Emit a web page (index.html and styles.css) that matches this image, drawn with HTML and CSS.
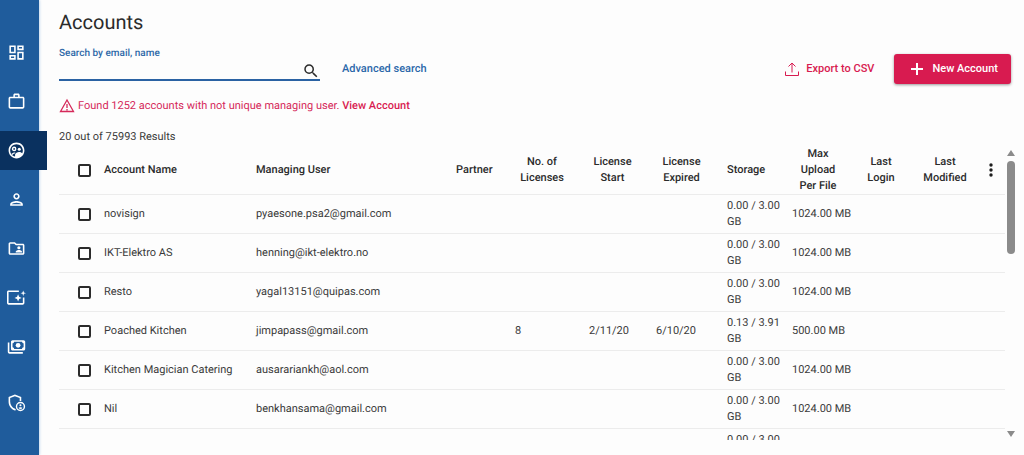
FILE: index.html
```
<!DOCTYPE html>
<html lang="en">
<head>
  <meta charset="utf-8">
  <title>Accounts</title>
  <link rel="stylesheet" href="styles.css">
</head>
<body>
  <nav class="sidebar">
    <a href="#" class="nav-item" aria-label="Dashboard">
      <svg viewBox="0 0 24 24"><path d="M19 5v2h-4V5h4M9 5v6H5V5h4m10 8v6h-4v-6h4M9 17v2H5v-2h4M21 3h-8v6h8V3zM11 3H3v10h8V3zm10 8h-8v10h8V11zm-10 4H3v6h8v-6z"/></svg>
    </a>
    <a href="#" class="nav-item" aria-label="Business">
      <svg viewBox="0 0 24 24"><path d="M14 6V4h-4v2h4zM4 8v11h16V8H4zm16-2c1.110 0 2 .89 2 2v11c0 1.110-.89 2-2 2H4c-1.110 0-2-.89-2-2V8c0-1.110.89-2 2-2h4V4c0-1.110.89-2 2-2h4c1.110 0 2 .89 2 2v2h4z"/></svg>
    </a>
    <a href="#" class="nav-item active" aria-label="Accounts">
      <svg viewBox="0 0 24 24"><path fill-rule="evenodd" d="M12 2C6.480 2 2 6.480 2 12s4.480 10 10 10 10-4.480 10-10S17.520 2 12 2zM4 12c0-4.400 3.600-8 8-8s8 3.600 8 8c0 1.200-.3 2.400-.8 3.400-1-.9-2.600-1.400-4-1.400-2.200 0-4.600 1.200-5 3v2.700C6.600 19 4 15.800 4 12z"/><path d="M5.500 16.500c1-1.500 3-2.300 5.200-2.100l-1.400 1.800c-1.200.1-2.100.6-2.500 1.800z"/><circle cx="9" cy="10" r="2" fill="none" stroke="currentColor" stroke-width="1.800"/><circle cx="15.500" cy="10.500" r="1.900"/></svg>
    </a>
    <a href="#" class="nav-item" aria-label="Users">
      <svg viewBox="0 0 24 24"><path d="M12 6c1.100 0 2 .9 2 2s-.9 2-2 2-2-.9-2-2 .9-2 2-2m0 10c2.700 0 5.800 1.290 6 2H6c.23-.72 3.310-2 6-2m0-12C9.790 4 8 5.790 8 8s1.790 4 4 4 4-1.790 4-4-1.790-4-4-4zm0 10c-2.670 0-8 1.340-8 4v2h16v-2c0-2.660-5.330-4-8-4z"/></svg>
    </a>
    <a href="#" class="nav-item" aria-label="Shared folders">
      <svg viewBox="0 0 24 24"><path d="M20 6h-8l-2-2H4c-1.100 0-2 .9-2 2v12c0 1.100.9 2 2 2h16c1.100 0 2-.9 2-2V8c0-1.100-.9-2-2-2zm0 12H4V6h5.170l2 2H20v10z"/><circle cx="15" cy="11" r="2"/><path d="M11 17v-1c0-1.330 2.670-2 4-2s4 .67 4 2v1z"/></svg>
    </a>
    <a href="#" class="nav-item" aria-label="Templates">
      <svg viewBox="0 0 24 24"><path d="M15 3H2c-1.100 0-2 .9-2 2v14c0 1.100.9 2 2 2h18c1.100 0 2-.9 2-2v-7h-2v7H2V5h13z"/><path d="M14 8l1.300 3.200 3.200 1.300-3.200 1.300L14 17l-1.300-3.200-3.200-1.300 3.200-1.300zM20.500 3l.9 2.600 2.600.9-2.600.9-.9 2.600-.9-2.600-2.600-.9 2.600-.9z"/></svg>
    </a>
    <a href="#" class="nav-item" aria-label="Payments">
      <svg viewBox="0 0 24 24"><path fill-rule="evenodd" d="M21 4H7c-1.100 0-2 .9-2 2v9c0 1.100.9 2 2 2h14c1.100 0 2-.9 2-2V6c0-1.100-.9-2-2-2zM9 15c0-1.100-.9-2-2-2V8c1.100 0 2-.9 2-2h10c0 1.100.9 2 2 2v5c-1.100 0-2 .9-2 2z"/><circle cx="14" cy="10.500" r="3"/><path d="M3 7H1v12c0 1.100.9 2 2 2h17v-2H3z"/></svg>
    </a>
    <a href="#" class="nav-item admin" aria-label="Administration">
      <svg viewBox="0 0 24 24"><path d="M18 10V5l-8-3-8 3v6c0 5 3.400 9.700 8 11l1.500-.5-1.300-1.700C6.600 18.600 4 15 4 11V6.400l6-2.300 6 2.300V10z"/><circle cx="17" cy="17" r="5" fill="none" stroke="currentColor" stroke-width="1.800"/><circle cx="17" cy="15.500" r="1.300"/><path d="M14.500 19c.5-1.500 4.500-1.500 5 0-1 1.500-4 1.500-5 0z"/></svg>
    </a>
  </nav>

  <main class="content">
    <h1>Accounts</h1>

    <div class="toolbar">
      <div class="search">
        <label for="search">Search by email, name</label>
        <div class="search-row">
          <input type="text" id="search">
          <button type="button" class="icon-btn" aria-label="Search">
            <svg viewBox="0 0 24 24"><path d="M15.500 14h-.79l-.28-.27A6.470 6.470 0 0 0 16 9.500 6.500 6.500 0 1 0 9.500 16c1.610 0 3.090-.59 4.230-1.570l.27.28v.79l5 4.990L20.490 19l-4.990-5zm-6 0C7.010 14 5 11.990 5 9.500S7.010 5 9.500 5 14 7.010 14 9.500 11.990 14 9.500 14z"/></svg>
          </button>
        </div>
      </div>
      <a href="#" class="advanced">Advanced search</a>
      <div class="actions">
        <button type="button" class="export-btn">
          <svg viewBox="0 0 16 16"><path d="M1.500 10.500v4h13v-4M8 11.500V2M4.500 5.500 8 2l3.500 3.500"/></svg>
          Export to CSV
        </button>
        <button type="button" class="new-btn">
          <svg viewBox="0 0 14 14"><path d="M7 1v12M1 7h12"/></svg>
          New Account
        </button>
      </div>
    </div>

    <p class="warning">
      <svg viewBox="0 0 16 16"><path d="M8 2 1.500 13.500h13zM8 6v4M8 11v1.500"/></svg>
      <span>Found 1252 accounts with not unique managing user. <a href="#">View Account</a></span>
    </p>

    <p class="results">20 out of 75993 Results</p>

    <div class="table-area">
      <div class="table-wrap">
        <table>
          <colgroup>
            <col class="col-check">
            <col class="col-name">
            <col>
            <col class="col-partner">
            <col class="col-licenses">
            <col class="col-start">
            <col class="col-expired">
            <col class="col-storage">
            <col class="col-upload">
            <col class="col-login">
            <col class="col-modified">
            <col class="col-menu">
          </colgroup>
          <thead>
            <tr>
              <th class="check"><input type="checkbox" aria-label="Select all"></th>
              <th>Account Name</th>
              <th>Managing User</th>
              <th>Partner</th>
              <th class="center">No. of<br>Licenses</th>
              <th class="center">License<br>Start</th>
              <th class="center">License<br>Expired</th>
              <th>Storage</th>
              <th class="center">Max<br>Upload<br>Per File</th>
              <th class="center">Last<br>Login</th>
              <th class="center modified">Last<br>Modified</th>
              <th>
                <button type="button" class="menu-btn" aria-label="Columns">
                  <svg viewBox="0 0 4 14"><circle cx="2" cy="2" r="1.700"/><circle cx="2" cy="7" r="1.700"/><circle cx="2" cy="12" r="1.700"/></svg>
                </button>
              </th>
            </tr>
          </thead>
          <tbody id="rows"></tbody>
        </table>
      </div>
      <div class="scrollbar" aria-hidden="true">
        <svg viewBox="0 0 8 6"><path d="M4 0l4 6H0z"/></svg>
        <div class="track"><div class="thumb"></div></div>
        <svg viewBox="0 0 8 6"><path d="M0 0h8L4 6z"/></svg>
      </div>
    </div>
  </main>

  <script>
    const accounts = [
      { name: "novisign", user: "pyaesone.psa2@gmail.com", storage: "0.00 / 3.00 GB", upload: "1024.00 MB" },
      { name: "IKT-Elektro AS", user: "henning@ikt-elektro.no", storage: "0.00 / 3.00 GB", upload: "1024.00 MB" },
      { name: "Resto", user: "yagal13151@quipas.com", storage: "0.00 / 3.00 GB", upload: "1024.00 MB" },
      { name: "Poached Kitchen", user: "jimpapass@gmail.com", licenses: "8", start: "2/11/20", expired: "6/10/20", storage: "0.13 / 3.91 GB", upload: "500.00 MB" },
      { name: "Kitchen Magician Catering", user: "ausarariankh@aol.com", storage: "0.00 / 3.00 GB", upload: "1024.00 MB" },
      { name: "Nil", user: "benkhansama@gmail.com", storage: "0.00 / 3.00 GB", upload: "1024.00 MB" },
      { storage: "0.00 / 3.00 GB" }
    ];

    document.getElementById("rows").innerHTML = accounts.map(a => `
      <tr>
        <td class="check">${a.name ? `<input type="checkbox" aria-label="Select ${a.name}">` : ""}</td>
        <td>${a.name || ""}</td>
        <td>${a.user || ""}</td>
        <td></td>
        <td>${a.licenses || ""}</td>
        <td>${a.start || ""}</td>
        <td>${a.expired || ""}</td>
        <td class="storage">${a.storage}</td>
        <td>${a.upload || ""}</td>
        <td></td>
        <td></td>
        <td></td>
      </tr>
    `).join("");
  </script>
</body>
</html>
```
FILE: styles.css
```
* {
  box-sizing: border-box;
}
body {
  margin: 0;
  height: 100vh;
  display: flex;
  overflow: hidden;
  background: #fdfdfd;
  color: #3a3a3a;
  font-family: Roboto, Arial, sans-serif;
  font-size: 11px;
  line-height: 16px;
  text-rendering: geometricPrecision;
}
button {
  font: inherit;
  border: none;
  background: none;
  padding: 0;
  cursor: pointer;
}
a {
  text-decoration: none;
}
svg {
  display: block;
  fill: currentColor;
}

/* sidebar */
.sidebar {
  flex: none;
  width: 39px;
  padding-top: 33px;
  background: #1f5c9c;
  box-shadow: 0 0 3px #9fc0e4;
}
.nav-item {
  display: flex;
  align-items: center;
  width: 47px;
  height: 39px;
  margin-bottom: 10px;
  padding-left: 7px;
  color: #fff;
}
.nav-item svg {
  width: 19px;
  height: 19px;
}
.nav-item.active {
  background: #0a315f;
}
.nav-item.admin {
  margin-top: 17px;
}

/* page header */
.content {
  flex: 1;
  min-width: 0;
  display: flex;
  flex-direction: column;
  padding: 10px 7px 15px 20px;
}
h1 {
  margin: 0 0 10px;
  color: #2b2b2b;
  font-size: 20px;
  font-weight: 400;
  line-height: 24px;
}
.toolbar {
  display: flex;
  align-items: flex-start;
  padding-right: 6px;
}
.search {
  width: 261px;
  padding-top: 2px;
  border-bottom: 2px solid #2a62a3;
}
.search label {
  display: block;
  color: #2f69a8;
  font-size: 10px;
  font-weight: 500;
}
.search-row {
  display: flex;
  align-items: center;
  height: 17px;
}
.search input {
  flex: 1;
  min-width: 0;
  border: none;
  outline: none;
  background: none;
  font: inherit;
}
.icon-btn {
  color: #2b2b2b;
}
.icon-btn svg {
  width: 18px;
  height: 18px;
}
.advanced {
  margin: 17px 0 0 22px;
  color: #2a67a9;
  font-weight: 500;
}
.actions {
  display: flex;
  align-items: center;
  gap: 20px;
  margin: 10px 0 0 auto;
}
.actions svg {
  fill: none;
  stroke: currentColor;
}
.export-btn,
.new-btn {
  display: flex;
  align-items: center;
  font-weight: 500;
}
.export-btn {
  gap: 6px;
  color: #d81b50;
}
.export-btn svg {
  width: 16px;
  height: 16px;
}
.new-btn {
  gap: 8px;
  height: 30px;
  padding: 0 13px 0 16px;
  border-radius: 3px;
  background: #d81b50;
  color: #fff;
  box-shadow: 0 1px 3px rgba(0, 0, 0, 0.4);
}
.new-btn svg {
  width: 14px;
  height: 14px;
  stroke-width: 2;
}
.warning {
  display: flex;
  align-items: center;
  gap: 3px;
  margin: 14px 0 0;
  color: #d5295a;
}
.warning svg {
  width: 16px;
  height: 16px;
  fill: none;
  stroke: currentColor;
  stroke-width: 1.3;
}
.warning a {
  color: #d81b50;
  font-weight: 500;
}
.results {
  margin: 15px 0 0;
}

/* table */
.table-area {
  flex: 1;
  min-height: 0;
  display: flex;
  margin-top: 1px;
}
.table-wrap {
  flex: 1;
  min-width: 0;
  overflow-y: auto;
  scrollbar-width: none;
}
table {
  width: 100%;
  table-layout: fixed;
  border-collapse: separate;
  border-spacing: 0;
}
th,
td {
  padding: 0;
  border-bottom: 1px solid #ececec;
  text-align: left;
}
th {
  height: 49px;
  color: #2b2b2b;
  font-weight: 500;
}
td {
  height: 39px;
}
th.center {
  padding-right: 20px;
  text-align: center;
}
th.modified {
  padding-right: 12px;
}
.check {
  padding-left: 19px;
}
td.storage {
  padding-right: 5px;
}
.col-check {
  width: 45px;
}
.col-name {
  width: 152px;
}
.col-partner {
  width: 59px;
}
.col-licenses {
  width: 74px;
}
.col-start {
  width: 67px;
}
.col-expired {
  width: 71px;
}
.col-storage {
  width: 65px;
}
.col-upload {
  width: 72px;
}
.col-login {
  width: 54px;
}
.col-modified {
  width: 66px;
}
.col-menu {
  width: 21px;
}
input[type="checkbox"] {
  appearance: none;
  display: block;
  width: 13px;
  height: 13px;
  margin: 0;
  border: 2px solid #2b2b2b;
  border-radius: 2px;
}
.menu-btn {
  display: block;
  padding: 0 5px;
  color: #1d1d1d;
}
.menu-btn svg {
  width: 4px;
  height: 14px;
}

/* scrollbar */
.scrollbar {
  display: flex;
  flex-direction: column;
  align-items: center;
  width: 12px;
  padding: 4px 0 3px;
  color: #8b8b8b;
}
.scrollbar svg {
  width: 8px;
  height: 6px;
}
.track {
  flex: 1;
  padding: 5px 0;
}
.thumb {
  width: 8px;
  height: 35%;
  border-radius: 4px;
  background: #8b8b8b;
}
```
